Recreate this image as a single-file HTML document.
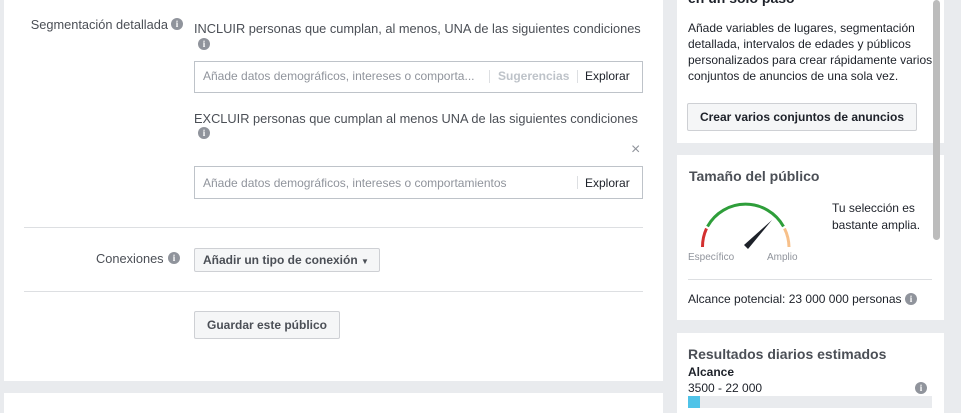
<!DOCTYPE html>
<html><head><meta charset="utf-8"><style>
*{margin:0;padding:0;box-sizing:border-box}
body{width:961px;height:408px;overflow:hidden;background:#e9ebee;font-family:"Liberation Sans",Arial,sans-serif;font-size:12px;color:#4b4f56;position:relative}
.a{position:absolute}
.p{background:#fff}
.i{display:inline-block;width:12px;height:12px;border-radius:50%;background:#90949c;color:#fff;font-size:9px;font-weight:bold;text-align:center;line-height:12px;font-family:"Liberation Serif",serif}
.box{border:1px solid #bec3c9;background:#fff}
.btn{background:#f5f6f7;border:1px solid #ced0d4;border-radius:2px;color:#4b4f56;font-weight:bold;text-align:center}
.ph{color:#90949c}
.t{color:#1d2129}
.h{font-size:12.8px;color:#4b4f56}
</style></head><body>
<div class="a p" style="left:4px;top:0;width:659px;height:381px"></div>
<div class="a p" style="left:4px;top:393px;width:659px;height:20px"></div>

<div class="a h" style="left:20px;top:17px;width:148px;text-align:right">Segmentación detallada</div>
<span class="a i" style="left:171px;top:18px">i</span>
<div class="a h" style="left:194px;top:21px;white-space:nowrap">INCLUIR personas que cumplan, al menos, UNA de las siguientes condiciones</div>
<span class="a i" style="left:198px;top:38px">i</span>
<div class="a box" style="left:194px;top:61px;width:449px;height:32px"></div>
<div class="a ph" style="left:203px;top:69px">Añade datos demográficos, intereses o comporta...</div>
<div class="a" style="left:489px;top:70px;width:1px;height:13px;background:#dddfe2"></div>
<div class="a" style="left:498px;top:69px;color:#bec3c9;font-weight:bold">Sugerencias</div>
<div class="a" style="left:577px;top:70px;width:1px;height:13px;background:#dddfe2"></div>
<div class="a t" style="left:585px;top:69px">Explorar</div>

<div class="a h" style="left:194px;top:111px;white-space:nowrap">EXCLUIR personas que cumplan al menos UNA de las siguientes condiciones</div>
<span class="a i" style="left:198px;top:127px">i</span>
<div class="a" style="left:631px;top:141px;color:#90949c;font-size:16px">×</div>
<div class="a box" style="left:194px;top:166px;width:449px;height:33px"></div>
<div class="a ph" style="left:203px;top:176px">Añade datos demográficos, intereses o comportamientos</div>
<div class="a" style="left:577px;top:176px;width:1px;height:13px;background:#dddfe2"></div>
<div class="a t" style="left:585px;top:176px">Explorar</div>

<div class="a" style="left:24px;top:227px;width:619px;height:1px;background:#dddfe2"></div>
<div class="a h" style="left:96px;top:251px">Conexiones</div>
<span class="a i" style="left:168px;top:252px">i</span>
<div class="a btn" style="left:194px;top:248px;width:186px;height:24px;text-align:left;padding:4px 8px;line-height:14px">Añadir un tipo de conexión <span style="font-size:8px;color:#4b4f56">▼</span></div>
<div class="a" style="left:24px;top:291px;width:619px;height:1px;background:#dddfe2"></div>
<div class="a btn" style="left:194px;top:311px;width:146px;height:28px;line-height:26px">Guardar este público</div>

<!-- right -->
<div class="a p" style="left:677px;top:0;width:267px;height:143px"></div>
<div class="a t" style="left:688px;top:-10px;font-size:14px;font-weight:bold">en un solo paso</div>
<div class="a t" style="left:688px;top:20px;width:250px;line-height:16px">Añade variables de lugares, segmentación detallada, intervalos de edades y públicos personalizados para crear rápidamente varios conjuntos de anuncios de una sola vez.</div>
<div class="a btn" style="left:687px;top:103px;width:230px;height:28px;line-height:26px;color:#1d2129">Crear varios conjuntos de anuncios</div>

<div class="a p" style="left:677px;top:155px;width:267px;height:165px"></div>
<div class="a" style="left:689px;top:168px;font-size:14px;font-weight:bold">Tamaño del público</div>
<svg class="a" style="left:680px;top:190px" width="130" height="65">
<path d="M22.5 57 A43.5 43.5 0 0 1 26.5 38.5" fill="none" stroke="#d32f2f" stroke-width="3"/>
<path d="M27.5 36.5 A43.5 43.5 0 0 1 103.5 36.5" fill="none" stroke="#2e9e3a" stroke-width="3"/>
<path d="M104.5 38.5 A43.5 43.5 0 0 1 109 57" fill="none" stroke="#f7c08a" stroke-width="3"/>
<path d="M64 55 L92 30 L68 59 Z" fill="#1d2129"/>
</svg>
<div class="a" style="left:688px;top:252px;font-size:10px;color:#90949c">Específico</div>
<div class="a" style="left:767px;top:252px;font-size:10px;color:#90949c">Amplio</div>
<div class="a t" style="left:832px;top:200px;line-height:17px">Tu selección es<br>bastante amplia.</div>
<div class="a" style="left:688px;top:279px;width:244px;height:1px;background:#dddfe2"></div>
<div class="a t" style="left:688px;top:292px">Alcance potencial: 23 000 000 personas</div>
<span class="a i" style="left:905px;top:293px">i</span>

<div class="a p" style="left:677px;top:333px;width:267px;height:80px"></div>
<div class="a" style="left:688px;top:346px;font-size:14px;font-weight:bold">Resultados diarios estimados</div>
<div class="a t" style="left:688px;top:365px;font-weight:bold">Alcance</div>
<div class="a t" style="left:688px;top:381px">3500 - 22 000</div>
<span class="a i" style="left:915px;top:382px">i</span>
<div class="a" style="left:688px;top:396px;width:244px;height:12px;background:#e9ebee"></div>
<div class="a" style="left:688px;top:396px;width:12px;height:12px;background:#4fc3e8"></div>

<div class="a" style="left:933px;top:0;width:7px;height:240px;border-radius:4px;background:#bcbcbc"></div>
</body></html>
